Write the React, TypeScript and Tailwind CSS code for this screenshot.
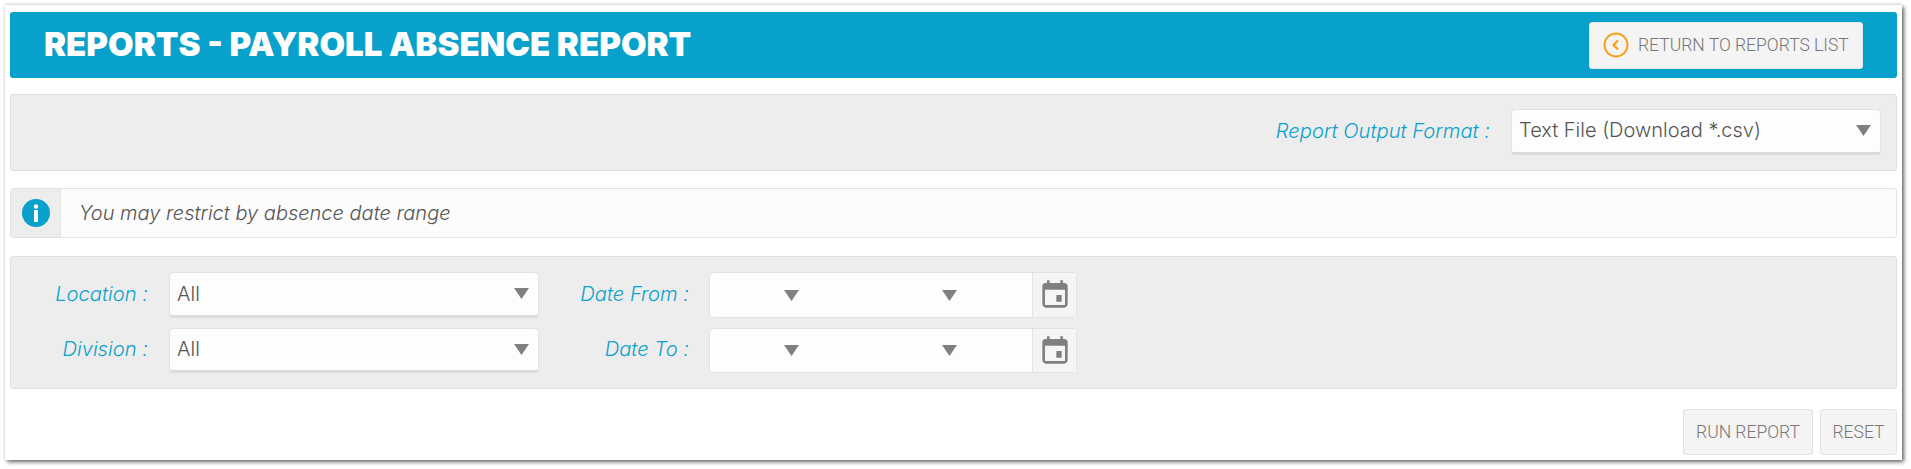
import React from "react";

const Arrow = () => (
  <svg width="15" height="11" viewBox="0 0 15 11" className="shrink-0">
    <path d="M0 0h15L7.5 11z" fill="#808080" />
  </svg>
);

const Calendar = () => (
  <svg width="32" height="32" viewBox="0 0 24 24" fill="#808080">
    <path d="M17 12h-4v5h4v-5zM16 1v2H8V1H6v2H5c-1.11 0-2.5.9-2.5 2v14c0 1.1 1.39 2.5 2.5 2.5h14c1.1 0 2.5-1.4 2.5-2.5V5c0-1.1-1.4-2-2.5-2h-1V1h-2zm3.5 18.5h-15V8h15v11.5z" />
  </svg>
);

const Select = ({ text, className }: { text: string; className: string }) => (
  <div className={`flex items-start justify-between rounded-[4px] border border-[#e2e2e2] border-b-[3px] border-b-[#dcdcdc] bg-[#fdfdfd] pl-[7px] pr-[9px] font-['Inter',sans-serif] ${className}`}>
    <span className="text-[#555555]">{text}</span>
    <span className="mt-[15px]"><Arrow /></span>
  </div>
);

const DateField = ({ className }: { className: string }) => (
  <div className={`flex w-[368px] items-stretch rounded-[4px] border border-[#e2e2e2] bg-[#fdfdfd] ${className}`}>
    <div className="flex w-[160px] items-center justify-end pr-[71px]"><Arrow /></div>
    <div className="flex w-[160px] items-center justify-end pr-[71px] -ml-[2px]"><Arrow /></div>
    <div className="ml-auto flex w-[44px] items-center justify-center border-l border-[#e2e2e2] bg-[#f5f5f5]"><Calendar /></div>
  </div>
);

const Label = ({ text, className }: { text: string; className: string }) => (
  <span className={`text-right font-['Inter',sans-serif] text-[20.2px] font-light italic text-[#0ba1cc] ${className}`}>{text}</span>
);

export default function App() {
  return (
    <div className="h-[469px] bg-white pt-[5px] pl-[5px] font-['Roboto',sans-serif]">
      <div className="h-[455px] w-[1897px] bg-white px-[5px] pt-[7px] shadow-[2px_2px_4px_rgba(0,0,0,0.6),0_-1px_3px_rgba(0,0,0,0.12)]">
        <div className="flex h-[66px] items-center justify-between rounded-[3px] bg-[#08a1cb] pl-[34px] pr-[34px]">
          <h1 className="font-['Inter',sans-serif] text-[33.1px] font-black uppercase leading-none text-white">Reports - Payroll Absence Report</h1>
          <button className="flex h-[47px] w-[274px] items-center rounded-[3px] border border-[#e6e6e6] bg-[#f4f4f4] pl-[13px] text-[17.5px] font-light text-[#777777]">
            <svg width="26" height="26" viewBox="0 0 26 26" fill="none" stroke="#f7a11a" strokeWidth="2" className="mr-[9px] shrink-0">
              <circle cx="13" cy="13" r="11.5" />
              <path d="M15 8.5L10.5 13l4.5 4.5" strokeWidth="2.2" />
            </svg>
            RETURN TO REPORTS LIST
          </button>
        </div>

        <div className="mt-[16px] flex h-[77px] items-center justify-end rounded-[3px] border border-[#dddddd] bg-[#ededed] pr-[15px]">
          <Label text="Report Output Format :" className="mr-[21px] -mt-[2px]" />
          <Select text="Text File (Download *.csv)" className="-mt-[1px] h-[46px] w-[370px] text-[20px] leading-[40px] font-light" />
        </div>

        <div className="mt-[17px] flex h-[50px] items-stretch rounded-[3px] border border-[#e2e2e2] bg-[#fcfcfc]">
          <div className="flex w-[50px] items-center justify-center border-r border-[#e2e2e2] bg-[#ededed]">
            <svg width="28" height="28" viewBox="0 0 28 28">
              <circle cx="14" cy="14" r="14" fill="#08a1cb" />
              <rect x="12" y="11" width="4" height="12" fill="#fff" />
              <circle cx="14" cy="7.5" r="2.2" fill="#fff" />
            </svg>
          </div>
          <p className="self-center pl-[18px] font-['Inter',sans-serif] text-[20px] font-light italic text-[#555555]">You may restrict by absence date range</p>
        </div>

        <div className="mt-[18px] flex h-[133px] rounded-[3px] border border-[#dddddd] bg-[#ededed] pt-[15px]">
          <div className="flex flex-col gap-[10px]">
            <div className="flex h-[46px] items-start">
              <Label text="Location :" className="w-[137px] leading-[44px]" />
              <Select text="All" className="ml-[21px] h-[46px] w-[370px] text-[20px] font-light leading-[42px]" />
            </div>
            <div className="flex h-[45px] items-start">
              <Label text="Division :" className="w-[137px] leading-[42px]" />
              <Select text="All" className="ml-[21px] h-[45px] w-[370px] text-[20px] font-light leading-[41px]" />
            </div>
          </div>
          <div className="flex flex-col gap-[10px]">
            <div className="flex h-[46px] items-start">
              <Label text="Date From :" className="w-[150px] leading-[44px]" />
              <DateField className="ml-[20px] h-[46px]" />
            </div>
            <div className="flex h-[45px] items-start">
              <Label text="Date To :" className="w-[150px] leading-[42px]" />
              <DateField className="ml-[20px] h-[45px]" />
            </div>
          </div>
        </div>

        <div className="mt-[20px] flex justify-end gap-[7px]">
          <button className="h-[46px] w-[130px] rounded-[3px] border border-[#e2e2e2] bg-[#f4f4f4] text-[17.5px] font-light text-[#777777]">RUN REPORT</button>
          <button className="h-[46px] w-[77px] rounded-[3px] border border-[#e2e2e2] bg-[#f4f4f4] text-[17.5px] font-light text-[#777777]">RESET</button>
        </div>
      </div>
    </div>
  );
}
